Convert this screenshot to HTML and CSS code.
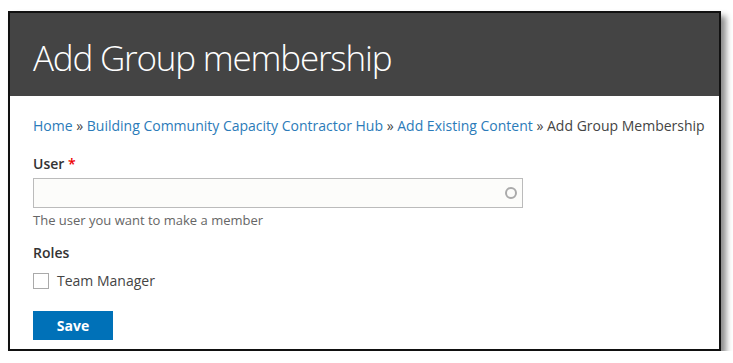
FILE: index.html
```html
<!DOCTYPE html>
<html lang="en">
<head>
<meta charset="utf-8">
<title>Add Group membership</title>
<link rel="stylesheet" href="styles.css">
</head>
<body>
<div class="frame">
  <header class="page-header">
    <h1 class="page-title">Add Group membership</h1>
  </header>
  <main class="content">
    <nav class="breadcrumb">
      <a href="#">Home</a> » <a href="#">Building Community Capacity Contractor Hub</a> » <a href="#">Add Existing Content</a> » <span>Add Group Membership</span>
    </nav>
    <form class="form">
      <div class="field">
        <label class="label" for="user">User <span class="req">*</span></label>
        <div class="input-wrap">
          <input id="user" class="text-input" type="text">
          <span class="throbber"></span>
        </div>
        <div class="desc">The user you want to make a member</div>
      </div>
      <div class="field roles">
        <div class="label">Roles</div>
        <label class="check-row"><span class="checkbox"></span><span>Team Manager</span></label>
      </div>
      <button type="button" class="save">Save</button>
    </form>
  </main>
</div>
</body>
</html>
```

FILE: styles.css
```css
html, body {
  margin: 0;
  padding: 0;
  background: #fff;
}
body {
  font-family: "Open Sans", "Noto Sans", sans-serif;
  color: #333;
}
.frame {
  margin: 11px 0 0 8px;
  width: 709px;
  height: 336px;
  border: 2px solid #111;
  box-shadow: 5px 5px 6px rgba(0,0,0,0.45);
  background: #fff;
  overflow: hidden;
}
.page-header {
  background: #444;
  height: 83px;
  display: flex;
  align-items: center;
  padding: 6px 0 0 23px;
  box-sizing: border-box;
}
.page-title {
  margin: 0;
  font-weight: 300;
  font-size: 35px;
  color: #fff;
  line-height: 1;
  letter-spacing: -1.2px;
}
.content {
  padding: 20px 23px 0;
}
.breadcrumb {
  font-size: 14px;
  line-height: 20px;
  color: #444;
  white-space: nowrap;
}
.breadcrumb a {
  color: #2b7bb9;
  text-decoration: none;
}
.form {
  margin-top: 18px;
}
.label {
  display: block;
  font-size: 14px;
  font-weight: 600;
  line-height: 20px;
  color: #333;
}
.req {
  color: #e00;
}
.input-wrap {
  position: relative;
  width: 490px;
  margin-top: 4px;
}
.text-input {
  display: block;
  box-sizing: border-box;
  width: 490px;
  height: 30px;
  border: 1px solid #bbb;
  background: #fcfcfa;
  margin: 0;
  padding: 0 8px;
}
.throbber {
  position: absolute;
  right: 6px;
  top: 9px;
  width: 8px;
  height: 8px;
  border: 2px solid #aaa;
  border-radius: 50%;
}
.desc {
  font-size: 13px;
  line-height: 20px;
  color: #666;
  margin-top: 2px;
}
.roles {
  margin-top: 13px;
}
.check-row {
  display: flex;
  align-items: center;
  gap: 8px;
  margin-top: 8px;
  font-size: 14px;
  color: #444;
}
.checkbox {
  width: 14px;
  height: 14px;
  border: 1px solid #aaa;
  background: #fff;
}
.save {
  margin-top: 21px;
  width: 80px;
  height: 29px;
  border: 0;
  background: #0071b8;
  color: #fff;
  font-family: "Open Sans", sans-serif;
  font-weight: 700;
  font-size: 14px;
  padding: 0;
}
```
